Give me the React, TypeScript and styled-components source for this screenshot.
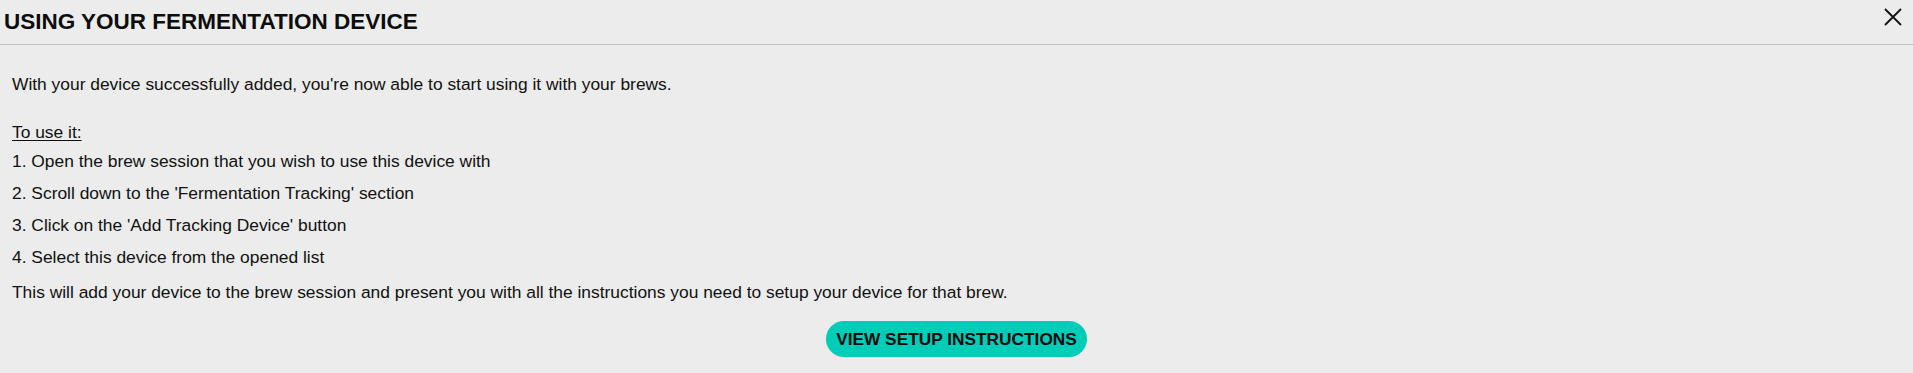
import React from "react";
import styled, { createGlobalStyle } from "styled-components";

const Global = createGlobalStyle`
  html, body {
    margin: 0;
    padding: 0;
    background: #ebeceb;
  }
  body {
    font-family: "Liberation Sans", Arial, sans-serif;
    color: #111111;
  }
`;

const Modal = styled.div`
  width: 1913px;
  height: 373px;
  background: #ebeceb;
  display: flex;
  flex-direction: column;
  box-sizing: border-box;
`;

const Header = styled.div`
  height: 45px;
  box-sizing: border-box;
  border-bottom: 1px solid #c2c3c2;
  display: flex;
  align-items: center;
  justify-content: space-between;
  padding: 0 10px 0 4px;
`;

const Title = styled.h1`
  margin: 0;
  font-size: 22.5px;
  font-weight: 700;
  letter-spacing: 0;
  line-height: 26px;
  color: #0d0d0d;
`;

const CloseButton = styled.button`
  width: 20px;
  height: 20px;
  padding: 0;
  border: 0;
  background: transparent;
  display: flex;
  align-items: center;
  justify-content: center;
  cursor: pointer;
  margin-top: -11px;
`;

const Body = styled.div`
  padding: 29px 12px 0 12px;
  display: flex;
  flex-direction: column;
  font-size: 17.4px;
`;

const Paragraph = styled.p<{ $mt?: number }>`
  margin: ${(p) => p.$mt ?? 0}px 0 0 0;
  line-height: 20px;
`;

const Subhead = styled.div`
  margin-top: 28px;
  line-height: 20px;
  text-decoration: underline;
  text-underline-offset: 2px;
`;

const Steps = styled.ol`
  list-style: none;
  margin: 3px 0 0 0;
  padding: 0;
`;

const Step = styled.li`
  line-height: 32px;
`;

const ButtonRow = styled.div`
  display: flex;
  justify-content: center;
  margin-top: 19px;
`;

const PrimaryButton = styled.button`
  height: 36px;
  padding: 0 10px;
  border: 0;
  border-radius: 18px;
  background: #00cdb8;
  color: #0a0a0a;
  font-family: "Liberation Sans", Arial, sans-serif;
  font-weight: 700;
  font-size: 17.3px;
  cursor: pointer;
`;

const steps = [
  "Open the brew session that you wish to use this device with",
  "Scroll down to the 'Fermentation Tracking' section",
  "Click on the 'Add Tracking Device' button",
  "Select this device from the opened list",
];

export default function App() {
  return (
    <>
      <Global />
      <Modal>
        <Header>
          <Title>USING YOUR FERMENTATION DEVICE</Title>
          <CloseButton aria-label="Close">
            <svg width="18" height="18" viewBox="0 0 18 18">
              <path d="M1 1 L17 17 M17 1 L1 17" stroke="#111" strokeWidth="1.8" fill="none" />
            </svg>
          </CloseButton>
        </Header>
        <Body>
          <Paragraph>
            With your device successfully added, you're now able to start using it with your brews.
          </Paragraph>
          <Subhead>To use it:</Subhead>
          <Steps>
            {steps.map((s, i) => (
              <Step key={i}>
                {i + 1}. {s}
              </Step>
            ))}
          </Steps>
          <Paragraph $mt={9}>
            This will add your device to the brew session and present you with all the instructions you need to setup your device for that brew.
          </Paragraph>
          <ButtonRow>
            <PrimaryButton>VIEW SETUP INSTRUCTIONS</PrimaryButton>
          </ButtonRow>
        </Body>
      </Modal>
    </>
  );
}
